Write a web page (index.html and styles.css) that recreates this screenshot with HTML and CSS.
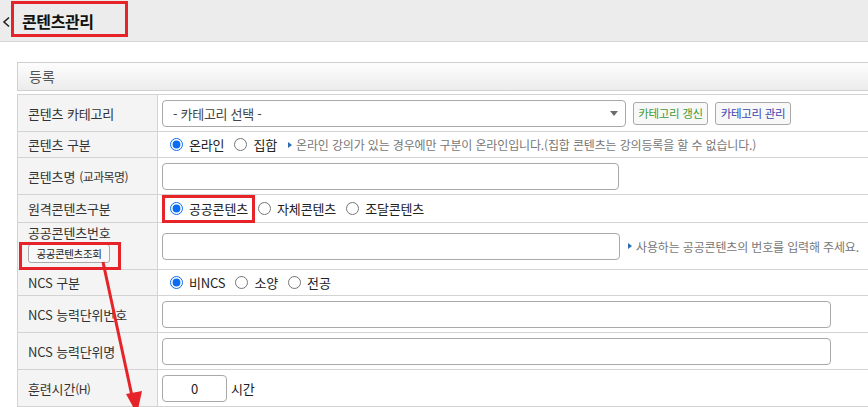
FILE: index.html
```html
<!DOCTYPE html>
<html lang="ko">
<head>
<meta charset="utf-8">
<title>콘텐츠관리</title>
<link rel="stylesheet" href="styles.css">
</head>
<body>
<div class="page">
  <header class="topbar">
    <svg class="back" width="12" height="12" viewBox="0 0 12 12"><polyline points="8,1.5 3,6 8,10.5" fill="none" stroke="#222" stroke-width="1.6"/></svg>
    <h1 class="title">콘텐츠관리</h1>
  </header>
  <main class="content">
    <section class="panel">
      <div class="panel-head">등록</div>
      <div class="form">
        <div class="row h37">
          <div class="label">콘텐츠 카테고리</div>
          <div class="value">
            <div class="select-wrap">
              <select class="select"><option>- 카테고리 선택 -</option></select>
              <span class="caret"></span>
            </div>
            <button class="btn btn-green">카테고리 갱신</button>
            <button class="btn btn-blue">카테고리 관리</button>
          </div>
        </div>
        <div class="row h26">
          <div class="label">콘텐츠 구분</div>
          <div class="value radios">
            <label class="radio"><input type="radio" name="kind" checked><span>온라인</span></label>
            <label class="radio"><input type="radio" name="kind"><span>집합</span></label>
            <span class="hint hint-1"><i class="tri"></i>온라인 강의가 있는 경우에만 구분이 온라인입니다.(집합 콘텐츠는 강의등록을 할 수 없습니다.)</span>
          </div>
        </div>
        <div class="row h37">
          <div class="label"><span>콘텐츠명</span><small>(교과목명)</small></div>
          <div class="value"><input class="text w457" type="text"></div>
        </div>
        <div class="row h28">
          <div class="label">원격콘텐츠구분</div>
          <div class="value radios">
            <label class="radio"><input type="radio" name="remote" checked><span>공공콘텐츠</span></label>
            <label class="radio"><input type="radio" name="remote"><span>자체콘텐츠</span></label>
            <label class="radio"><input type="radio" name="remote"><span>조달콘텐츠</span></label>
          </div>
        </div>
        <div class="row h47">
          <div class="label stack">
            <span class="stack-text">공공콘텐츠번호</span>
            <button class="btn btn-small">공공콘텐츠조회</button>
          </div>
          <div class="value">
            <input class="text w458" type="text">
            <span class="hint hint-2"><i class="tri"></i>사용하는 공공콘텐츠의 번호를 입력해 주세요.</span>
          </div>
        </div>
        <div class="row h26">
          <div class="label">NCS 구분</div>
          <div class="value radios">
            <label class="radio"><input type="radio" name="ncs" checked><span>비NCS</span></label>
            <label class="radio"><input type="radio" name="ncs"><span>소양</span></label>
            <label class="radio"><input type="radio" name="ncs"><span>전공</span></label>
          </div>
        </div>
        <div class="row h37">
          <div class="label">NCS 능력단위번호</div>
          <div class="value"><input class="text w669" type="text"></div>
        </div>
        <div class="row h37">
          <div class="label">NCS 능력단위명</div>
          <div class="value"><input class="text w669" type="text"></div>
        </div>
        <div class="row h37">
          <div class="label"><span>훈련시간</span><small class="tight">(H)</small></div>
          <div class="value"><input class="text w65 center" type="text" value="0"><span class="unit">시간</span></div>
        </div>
      </div>
    </section>
  </main>

  <div class="mark mark-title"></div>
  <div class="mark mark-radio"></div>
  <div class="mark mark-btn"></div>
  <svg class="arrow" width="868" height="407" viewBox="0 0 868 407">
    <line x1="103" y1="262" x2="132" y2="396" stroke="#e52329" stroke-width="3"/>
    <polygon points="126,394 142,391 137,414" fill="#e52329"/>
  </svg>
</div>
</body>
</html>
```

FILE: styles.css
```css
* { box-sizing: border-box; }

html, body {
  margin: 0;
  padding: 0;
  background: #fff;
}

body {
  font-family: "Noto Sans CJK KR", "Noto Sans", sans-serif;
  color: #333;
  overflow: hidden;
}

.page {
  position: relative;
  width: 868px;
  height: 407px;
  overflow: hidden;
}

/* top bar */
.topbar {
  height: 42px;
  background: #ececec;
  border-bottom: 1px solid #d6d6d6;
  display: flex;
  align-items: center;
  padding-left: 1px;
}

.back {
  display: block;
  margin-top: 2px;
}

.title {
  margin: 0 0 0 9px;
  font-size: 16px;
  font-weight: 700;
  color: #111;
  letter-spacing: -0.4px;
  line-height: 20px;
}

/* content */
.content {
  padding: 20px 0 0 17px;
}

.panel {
  width: 900px;
}

.panel-head {
  height: 29px;
  border: 1px solid #d0d0d0;
  background: linear-gradient(#fdfdfd, #ececec);
  padding-left: 11px;
  font-size: 14px;
  line-height: 26px;
  color: #555;
}

.form {
  margin-top: 3px;
  border-top: 1px solid #d3d3d3;
  border-left: 1px solid #d3d3d3;
}

.row {
  display: flex;
  border-bottom: 1px solid #d3d3d3;
}

.h37 { height: 37px; }
.h26 { height: 26px; }
.h28 { height: 28px; }
.h47 { height: 47px; }

.label {
  width: 140px;
  flex: none;
  background: #f4f4f4;
  border-right: 1px solid #d3d3d3;
  padding-left: 10px;
  display: flex;
  align-items: center;
  font-size: 13px;
  letter-spacing: -0.15px;
  color: #333;
}

.label small {
  font-size: 12px;
  letter-spacing: -0.6px;
  margin-left: 4px;
}

.label small.tight { margin-left: 0; }

.label.stack {
  flex-direction: column;
  align-items: flex-start;
  justify-content: flex-start;
  padding-top: 2px;
  gap: 3px;
}

.stack-text {
  line-height: 16px;
}

.value {
  flex: 1;
  display: flex;
  align-items: center;
  padding-left: 4px;
  font-size: 13px;
  letter-spacing: -0.15px;
}

/* select */
.select-wrap {
  position: relative;
  width: 464px;
  height: 27px;
}

.select {
  appearance: none;
  -webkit-appearance: none;
  width: 100%;
  height: 100%;
  border: 1px solid #a9a9a9;
  border-radius: 4px;
  background: #fff;
  padding-left: 10px;
  font-family: inherit;
  font-size: 13px;
  letter-spacing: -0.3px;
  color: #444;
}

.caret {
  position: absolute;
  right: 8px;
  top: 11px;
  width: 0;
  height: 0;
  border-left: 4px solid transparent;
  border-right: 4px solid transparent;
  border-top: 5px solid #6d6d6d;
}

/* buttons */
.btn {
  font-family: inherit;
  background: #f8f8f8;
  border: 1px solid #a9a9a9;
  border-radius: 3px;
  cursor: pointer;
}

.btn-green,
.btn-blue {
  height: 23px;
  font-size: 11.5px;
  letter-spacing: -0.3px;
  padding: 0;
  margin-left: 7px;
  line-height: 20px;
}

.btn-green { color: #3f9a3a; width: 75px; }
.btn-blue { color: #3b43ad; width: 76px; }

.btn-small {
  height: 19px;
  width: 82px;
  padding: 0;
  font-size: 10.5px;
  letter-spacing: -0.4px;
  color: #222;
  line-height: 16px;
}

/* text inputs */
.text {
  height: 27px;
  border: 1px solid #a9a9a9;
  border-radius: 4px;
  background: #fff;
  font-family: inherit;
  font-size: 13px;
  padding: 0 6px;
}

.w457 { width: 457px; }
.w458 { width: 458px; }
.w669 { width: 669px; }
.w65 { width: 65px; }
.center { text-align: center; color: #222; }

.unit {
  margin-left: 4px;
  color: #222;
}

/* radios */
.radio {
  display: inline-flex;
  align-items: center;
  color: #222;
}

.radio input {
  width: 13px;
  height: 13px;
  margin: 0 6px 0 8px;
  accent-color: #0a6cf0;
}

.radios .radio + .radio input { margin-left: 10px; }

/* hints */
.hint {
  display: inline-flex;
  align-items: center;
  font-size: 12px;
  letter-spacing: -0.15px;
  color: #777;
}

.hint-1 { margin-left: 11px; }
.hint-2 { margin-left: 8px; }

.tri {
  display: inline-block;
  width: 0;
  height: 0;
  border-top: 3.5px solid transparent;
  border-bottom: 3.5px solid transparent;
  border-left: 4px solid #2b6fb0;
  margin-right: 4px;
}

/* annotations */
.mark {
  position: absolute;
  border: 3px solid #e52329;
  pointer-events: none;
}

.mark-title { left: 11px; top: 1px; width: 117px; height: 36px; }
.mark-radio { left: 162px; top: 195px; width: 93px; height: 28px; }
.mark-btn { left: 19px; top: 242px; width: 102px; height: 28px; }

.arrow {
  position: absolute;
  left: 0;
  top: 0;
  pointer-events: none;
}
```
